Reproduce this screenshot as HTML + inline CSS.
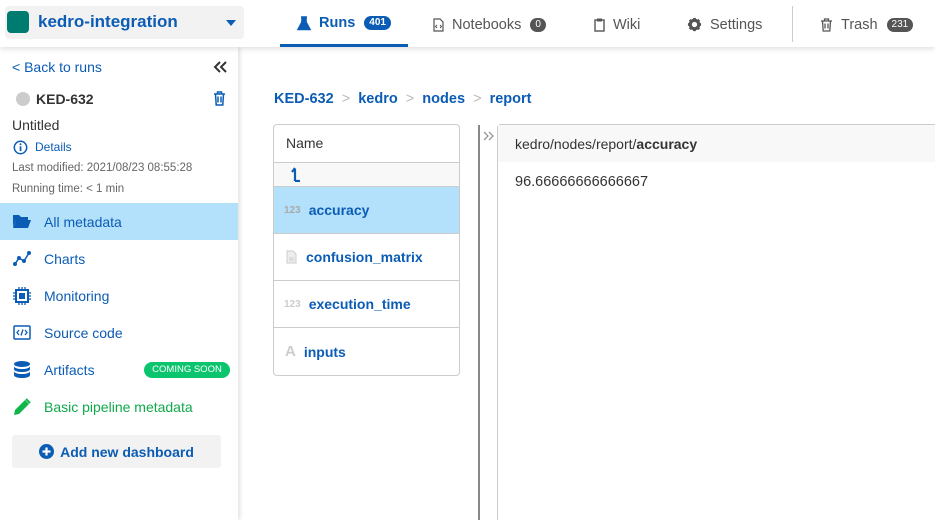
<!DOCTYPE html>
<html><head><meta charset="utf-8"><style>
*{box-sizing:border-box;margin:0;padding:0}
body{width:935px;height:520px;overflow:hidden;background:#fff;font-family:"Liberation Sans",sans-serif;position:relative;color:#333}
.a{position:absolute}
.blue{color:#0b5cb5}
.hdr{left:0;top:0;width:935px;height:47px;background:#fff;box-shadow:0 2px 5px rgba(0,0,0,.12);z-index:3}
.proj{left:5px;top:6px;width:239px;height:33px;background:#f2f2f2;border-radius:4px}
.tab{top:0;height:47px;display:flex;align-items:center;font-size:14.5px;color:#555;padding-top:2px}
.tab svg{margin-right:8px}
.badge{display:inline-block;background:#555;color:#fff;font-size:10px;border-radius:8px;padding:1px 5px;margin-left:9px;line-height:12px}
.side{left:0;top:47px;width:238px;height:473px;background:#fff;box-shadow:2px 0 4px rgba(0,0,0,.12);z-index:2}
.nav{left:0;width:238px;height:37px;display:flex;align-items:center;font-size:14px;color:#0b5cb5}
.nav .ic{width:44px;display:flex;justify-content:center;padding-left:0}
.row{left:274px;width:186px;border-top:1px solid #ccc;display:flex;align-items:center;font-size:14px;font-weight:bold;color:#0b5cb5}
</style></head><body>
<div class="a hdr">
  <div class="a proj">
    <div class="a" style="left:2px;top:5px;width:22px;height:22px;background:#007b70;border-radius:4px"></div>
    <div class="a" style="left:33px;top:6px;font-size:17px;font-weight:bold;color:#0b5cb5">kedro-integration</div>
    <div class="a" style="left:221px;top:14px;width:0;height:0;border-left:5px solid transparent;border-right:5px solid transparent;border-top:6px solid #0b5cb5"></div>
  </div>
  <div class="a tab" style="left:280px;width:128px;justify-content:center;color:#0b5cb5;font-weight:bold;border-bottom:3px solid #0b5cb5">
    <svg width="14" height="15" viewBox="0 0 14 15"><path d="M4 1h6M5 1v5L1 13.5h12L9 6V1" fill="#0b5cb5" stroke="#0b5cb5" stroke-width="1.6"/></svg>Runs<span class="badge" style="background:#0b5cb5">401</span></div>
  <div class="a tab" style="left:433px">
    <svg width="11" height="14" viewBox="0 0 11 14"><path d="M1 1h6l3 3v9H1z" fill="none" stroke="#555" stroke-width="1.2"/><path d="M4 7l-1.5 1.5L4 10M7 7l1.5 1.5L7 10" fill="none" stroke="#555"/></svg>Notebooks<span class="badge">0</span></div>
  <div class="a tab" style="left:594px">
    <svg width="11" height="14" viewBox="0 0 11 14"><rect x="1" y="2" width="9" height="11" fill="none" stroke="#555" stroke-width="1.4"/><rect x="3" y="0.5" width="5" height="3" fill="#555"/></svg>Wiki</div>
  <div class="a tab" style="left:687px">
    <svg width="15" height="15" viewBox="0 0 16 16"><circle cx="8" cy="8" r="4.5" fill="none" stroke="#555" stroke-width="3.4"/><g stroke="#555" stroke-width="3"><path d="M8 1v3M8 12v3M1 8h3M12 8h3M3 3l2 2M11 11l2 2M3 13l2-2M11 5l2-2"/></g></svg>Settings</div>
  <div class="a" style="left:792px;top:6px;width:1px;height:36px;background:#ccc"></div>
  <div class="a tab" style="left:820px">
    <svg width="13" height="14" viewBox="0 0 13 14"><path d="M1 3h11M4.5 3V1h4v2M2.5 3l.7 10h6.6l.7-10M5 5.5v5M8 5.5v5" fill="none" stroke="#555" stroke-width="1.3"/></svg>Trash<span class="badge">231</span></div>
</div>

<div class="a side">
  <div class="a blue" style="left:12px;top:12px;font-size:14px">&lt; Back to runs</div>
  <svg class="a" style="left:213px;top:14px" width="15" height="12" viewBox="0 0 15 12"><path d="M7 1L2 6l5 5M13 1L8 6l5 5" fill="none" stroke="#333" stroke-width="2"/></svg>
  <div class="a" style="left:16px;top:45px;width:14px;height:14px;border-radius:50%;background:#ccc"></div>
  <div class="a" style="left:36px;top:44px;font-size:14px;font-weight:bold;color:#333">KED-632</div>
  <svg class="a" style="left:213px;top:44px" width="13" height="15" viewBox="0 0 13 15"><path d="M1 3h11M4.5 3V1h4v2M2.5 3l.7 11h6.6l.7-11M5 5.5v6M8 5.5v6" fill="none" stroke="#0b5cb5" stroke-width="1.5"/></svg>
  <div class="a" style="left:12px;top:70px;font-size:14px;color:#333">Untitled</div>
  <svg class="a" style="left:13px;top:93px" width="15" height="15" viewBox="0 0 15 15"><circle cx="7.5" cy="7.5" r="6.2" fill="none" stroke="#0b5cb5" stroke-width="1.5"/><rect x="6.7" y="6.3" width="1.7" height="4.8" fill="#0b5cb5"/><circle cx="7.5" cy="4.3" r="1" fill="#0b5cb5"/></svg>
  <div class="a blue" style="left:35px;top:93px;font-size:12px">Details</div>
  <div class="a" style="left:12px;top:115px;font-size:11.5px;color:#666">Last modified: 2021/08/23 08:55:28</div>
  <div class="a" style="left:12px;top:136px;font-size:11.5px;color:#666">Running time: &lt; 1 min</div>

  <div class="a nav" style="top:156px;background:#b3e0fb">
    <div class="ic"><svg width="20" height="15" viewBox="0 0 20 15"><path d="M1 1h6l2 2h7v3H4L1 13z" fill="#0b5cb5"/><path d="M4 6h15l-3 8H1z" fill="#0b5cb5"/></svg></div>All metadata</div>
  <div class="a nav" style="top:193px">
    <div class="ic"><svg width="18" height="15" viewBox="0 0 18 15"><path d="M2 13l4-6 5 3 5-8" fill="none" stroke="#0b5cb5" stroke-width="1.5"/><circle cx="2" cy="13" r="2" fill="#0b5cb5"/><circle cx="6" cy="7" r="2" fill="#0b5cb5"/><circle cx="11" cy="10" r="2" fill="#0b5cb5"/><circle cx="16" cy="2" r="2" fill="#0b5cb5"/></svg></div>Charts</div>
  <div class="a nav" style="top:230px">
    <div class="ic"><svg width="18" height="18" viewBox="0 0 18 18"><rect x="3" y="3" width="12" height="12" fill="none" stroke="#0b5cb5" stroke-width="2"/><rect x="6" y="6" width="6" height="6" fill="#0b5cb5"/><path d="M6 0v3M9 0v3M12 0v3M6 15v3M9 15v3M12 15v3M0 6h3M0 9h3M0 12h3M15 6h3M15 9h3M15 12h3" stroke="#0b5cb5" stroke-width="1.3"/></svg></div>Monitoring</div>
  <div class="a nav" style="top:267px">
    <div class="ic"><svg width="18" height="15" viewBox="0 0 18 15"><rect x="1" y="1" width="16" height="13" rx="1" fill="none" stroke="#0b5cb5" stroke-width="1.5"/><path d="M6 5L4 7.5 6 10M12 5l2 2.5-2 2.5M10 4.5L8 10.5" fill="none" stroke="#0b5cb5" stroke-width="1.3"/></svg></div>Source code</div>
  <div class="a nav" style="top:304px">
    <div class="ic"><svg width="16" height="18" viewBox="0 0 16 18"><ellipse cx="8" cy="3" rx="8" ry="3" fill="#0b5cb5"/><path d="M0 5c0 4 16 4 16 0v3c0 4-16 4-16 0zM0 10c0 4 16 4 16 0v4c0 4-16 4-16 0z" fill="#0b5cb5"/></svg></div>Artifacts
    <div class="a" style="left:144px;top:11px;width:86px;height:16px;background:#0bc56e;border-radius:8px;color:#fff;font-size:9.5px;text-align:center;line-height:16px">COMING SOON</div></div>
  <div class="a nav" style="top:341px;color:#10a94a">
    <div class="ic"><svg width="18" height="18" viewBox="0 0 18 18"><path d="M1 17l1-5L12 2l4 4L6 16z" fill="#10b64a"/><path d="M13 1l4 4" stroke="#10b64a" stroke-width="2"/></svg></div>Basic pipeline metadata</div>
  <div class="a" style="left:12px;top:388px;width:209px;height:33px;background:#f2f2f2;border-radius:3px;display:flex;align-items:center;justify-content:center;font-size:14px;font-weight:bold;color:#0b5cb5">
    <svg width="15" height="15" viewBox="0 0 15 15" style="margin-right:6px"><circle cx="7.5" cy="7.5" r="7.5" fill="#0b5cb5"/><path d="M7.5 3.5v8M3.5 7.5h8" stroke="#fff" stroke-width="2.2"/></svg>Add new dashboard</div>
</div>

<div class="a" style="left:274px;top:91px;font-size:14.5px;font-weight:bold;color:#0b5cb5;white-space:pre">KED-632  <span style="color:#bbb;font-weight:normal">&gt;</span>  kedro  <span style="color:#bbb;font-weight:normal">&gt;</span>  nodes  <span style="color:#bbb;font-weight:normal">&gt;</span>  report</div>

<div class="a" style="left:273px;top:124px;width:187px;height:252px;border:1px solid #ccc;border-radius:4px"></div>
<div class="a" style="left:286px;top:135px;font-size:14px;color:#333">Name</div>
<div class="a" style="left:274px;top:162px;width:185px;height:25px;background:#f8f8f8;border-top:1px solid #ccc"></div>
<svg class="a" style="left:291px;top:167px" width="10" height="15" viewBox="0 0 10 15"><path d="M4 14V2M1 5l3-4M4 14h5" fill="none" stroke="#0b5cb5" stroke-width="2.2"/></svg>
<div class="a row" style="top:186px;height:47px;width:185px;background:#b3e0fb"><span style="font-size:10px;color:#aaa;margin:0 8px 0 10px">123</span>accuracy</div>
<div class="a row" style="top:233px;height:47px;width:185px"><svg width="11" height="14" viewBox="0 0 11 14" style="margin:0 9px 0 12px"><path d="M1 1h6l3 3v9H1z" fill="#eee" stroke="#ccc"/><path d="M3 8h5M3 10h5" stroke="#ccc"/></svg>confusion_matrix</div>
<div class="a row" style="top:280px;height:47px;width:185px"><span style="font-size:10px;color:#ccc;margin:0 8px 0 10px">123</span>execution_time</div>
<div class="a row" style="top:327px;height:48px;width:185px"><span style="font-size:15px;color:#ccc;margin:0 8px 0 11px">A</span>inputs</div>

<div class="a" style="left:478px;top:125px;width:2px;height:395px;background:#888"></div>
<svg class="a" style="left:483px;top:131px" width="12" height="10" viewBox="0 0 12 10"><path d="M1 1l4 4-4 4M6 1l4 4-4 4" fill="none" stroke="#999" stroke-width="1.3"/></svg>
<div class="a" style="left:497px;top:124px;width:438px;height:396px;border-left:1px solid #ccc;border-top:1px solid #ccc;border-top-left-radius:4px"></div>
<div class="a" style="left:498px;top:125px;width:437px;height:37px;background:#f8f8f8"></div>
<div class="a" style="left:515px;top:136px;font-size:14px;color:#333">kedro/nodes/report/<b>accuracy</b></div>
<div class="a" style="left:515px;top:174px;font-size:14.5px;color:#333">96.66666666666667</div>
</body></html>
